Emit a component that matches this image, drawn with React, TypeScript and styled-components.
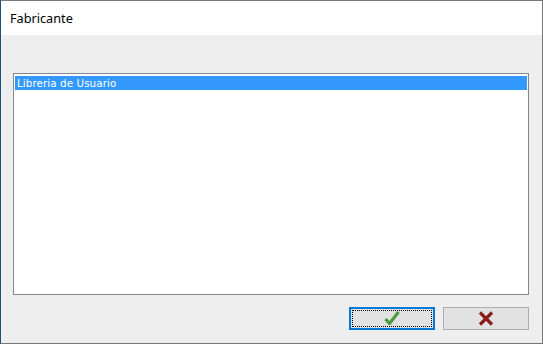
import styled, { createGlobalStyle } from "styled-components";

const GlobalStyle = createGlobalStyle`
  html, body {
    margin: 0;
    padding: 0;
    background: #ffffff;
  }
`;

const Window = styled.div`
  width: 543px;
  height: 344px;
  box-sizing: border-box;
  border: 1px solid #777777;
  border-left-color: #1e4f7a;
  display: flex;
  flex-direction: column;
  background: #f0f0f0;
  font-family: "DejaVu Sans", sans-serif;
`;

const TitleBar = styled.div`
  height: 34px;
  flex: none;
  background: #ffffff;
  display: flex;
  align-items: center;
  padding-left: 9px;
  font-family: "Noto Sans", "Open Sans", sans-serif;
  font-size: 12.7px;
  color: #000000;
`;

const Body = styled.div`
  flex: 1;
  display: flex;
  flex-direction: column;
  padding: 38px 13px 13px 12px;
  background: #eeeeee;
`;

const ListBox = styled.ul`
  margin: 0;
  list-style: none;
  height: 222px;
  box-sizing: border-box;
  border: 1px solid #828790;
  background: #ffffff;
  padding: 2px 1px;
`;

const ListItem = styled.li<{ $selected?: boolean }>`
  height: 14px;
  line-height: 14px;
  padding-left: 2px;
  font-size: 10.3px;
  letter-spacing: 0.1px;
  background: ${(p) => (p.$selected ? "#3399ff" : "transparent")};
  color: ${(p) => (p.$selected ? "#ffffff" : "#000000")};
  white-space: nowrap;
`;

const ButtonRow = styled.div`
  display: flex;
  justify-content: flex-end;
  gap: 8px;
  margin-top: 12px;
`;

const Button = styled.button<{ $focused?: boolean }>`
  width: 86px;
  height: 23px;
  box-sizing: border-box;
  margin: 0;
  padding: 0;
  background: #e1e1e1;
  border: ${(p) => (p.$focused ? "2px solid #0078d7" : "1px solid #adadad")};
  display: flex;
  align-items: center;
  justify-content: center;
  position: relative;
  ${(p) =>
    p.$focused &&
    `
    &::after {
      content: "";
      position: absolute;
      inset: 1px;
      border: 1px dotted #000000;
    }
  `}
`;

const CheckIcon = () => (
  <svg width="16" height="15" viewBox="0 0 16 15">
    <path
      d="M1.5 8 L5.5 12.5 L14.5 1"
      fill="none"
      stroke="#4d9a3e"
      strokeWidth="3.2"
      strokeLinejoin="round"
    />
  </svg>
);

const CrossIcon = () => (
  <svg width="16" height="15" viewBox="0 0 16 15">
    <path
      d="M2 1.5 L14 13.5 M14 1.5 L2 13.5"
      fill="none"
      stroke="#8b1c1c"
      strokeWidth="3.2"
    />
  </svg>
);

const App = () => {
  return (
    <>
      <GlobalStyle />
      <Window>
        <TitleBar>Fabricante</TitleBar>
        <Body>
          <ListBox>
            <ListItem $selected>Libreria de Usuario</ListItem>
          </ListBox>
          <ButtonRow>
            <Button $focused>
              <CheckIcon />
            </Button>
            <Button>
              <CrossIcon />
            </Button>
          </ButtonRow>
        </Body>
      </Window>
    </>
  );
};

export default App;
